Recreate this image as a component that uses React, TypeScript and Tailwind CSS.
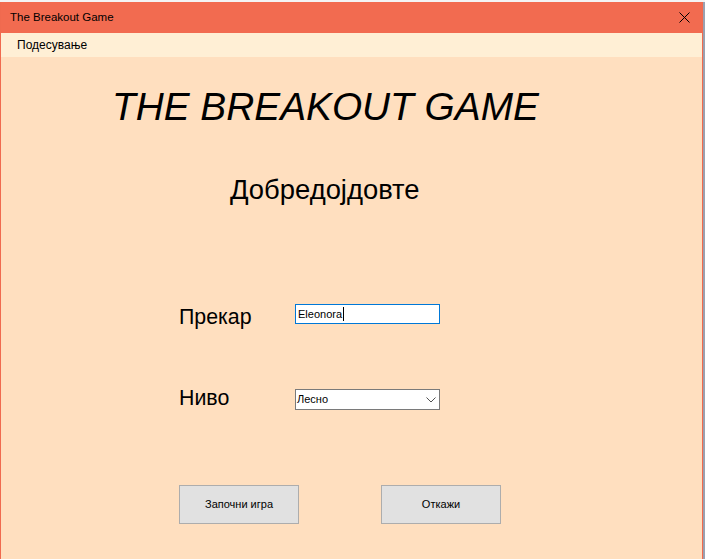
import React from "react";

const sans = { fontFamily: '"Liberation Sans", Arial, sans-serif' };

export default function App() {
  return (
    <div className="w-[705px] h-[559px] overflow-hidden flex flex-col bg-[#e8e8e8]" style={sans}>
      <div className="h-[2px] bg-[#f4f4f4] shrink-0" />
      <div className="flex flex-1 min-h-0">
        <div className="w-[703px] flex flex-col border-x border-[#f06a4f] shrink-0">
          {/* title bar */}
          <div className="h-[31px] bg-[#f26b50] flex items-center justify-between pl-[9px] pr-[12px] shrink-0">
            <span className="text-[11.5px] text-black leading-none">The Breakout Game</span>
            <svg width="11" height="11" viewBox="0 0 11 11" className="mb-[1px]">
              <path d="M0.5 0.5 L10.5 10.5 M10.5 0.5 L0.5 10.5" stroke="#000" strokeWidth="1" />
            </svg>
          </div>
          {/* menu */}
          <div className="h-[24px] bg-[#ffefd5] flex items-center pl-[16px] shrink-0">
            <span className="text-[12px] text-black leading-none">Подесување</span>
          </div>
          {/* body */}
          <div className="flex-1 bg-[#ffdfbf] flex flex-col">
            <div className="mt-[31px] pl-[111px] text-[38.8px] leading-none italic text-black whitespace-nowrap">
              THE BREAKOUT GAME
            </div>
            <div className="mt-[49px] pl-[229px] text-[27.4px] leading-none text-black whitespace-nowrap">
              Добредојдовте
            </div>
            <div className="mt-[101px] h-[20px] flex items-start pl-[178px]">
              <div className="w-[116px] mt-[3px] text-[21.33px] leading-none text-black">Прекар</div>
              <div className="w-[145px] h-[20px] bg-white border border-[#0078d7] flex items-center pl-[2px]">
                <span className="text-[11px] leading-none text-black">Eleonora</span>
                <span className="w-[1px] h-[14px] bg-black ml-[1px]" />
              </div>
            </div>
            <div className="mt-[65px] h-[21px] flex items-start pl-[178px]">
              <div className="w-[116px] -mt-px text-[21.33px] leading-none text-black">Ниво</div>
              <div className="w-[145px] h-[21px] bg-white border border-[#7a7a7a] flex items-center justify-between pl-[1px] pr-[3px]">
                <span className="text-[11px] leading-none text-black">Лесно</span>
                <svg width="10" height="6" viewBox="0 0 10 6">
                  <path d="M0.5 0.5 L5 5 L9.5 0.5" stroke="#505050" strokeWidth="1" fill="none" />
                </svg>
              </div>
            </div>
            <div className="mt-[75px] flex pl-[178px] gap-[82px]">
              <div className="w-[120px] h-[39px] bg-[#e1e1e1] border border-[#adadad] flex items-center justify-center text-[11px] text-black">
                Започни игра
              </div>
              <div className="w-[120px] h-[39px] bg-[#e1e1e1] border border-[#adadad] flex items-center justify-center text-[11px] text-black">
                Откажи
              </div>
            </div>
          </div>
        </div>
        <div className="flex-1 bg-[#9aa0b0]" />
      </div>
    </div>
  );
}
